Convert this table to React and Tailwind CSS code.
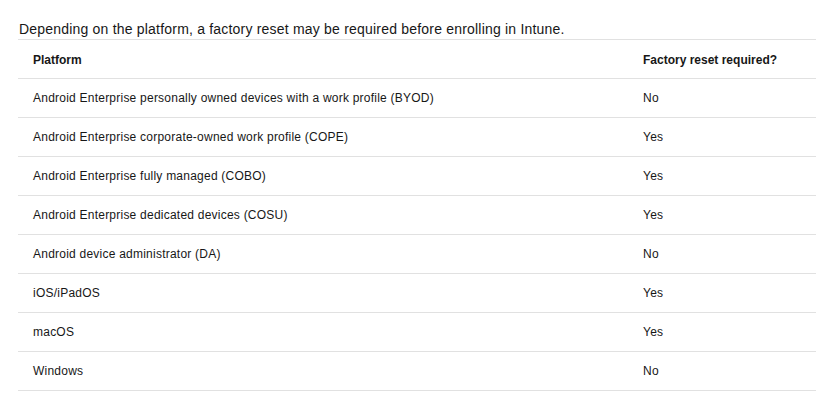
const rows = [
  ['Android Enterprise personally owned devices with a work profile (BYOD)', 'No'],
  ['Android Enterprise corporate-owned work profile (COPE)', 'Yes'],
  ['Android Enterprise fully managed (COBO)', 'Yes'],
  ['Android Enterprise dedicated devices (COSU)', 'Yes'],
  ['Android device administrator (DA)', 'No'],
  ['iOS/iPadOS', 'Yes'],
  ['macOS', 'Yes'],
  ['Windows', 'No'],
];

export default function App() {
  return (
    <div className="bg-white min-h-[403px] pl-[18px] pt-[19px] text-[#171717] font-['Liberation_Sans',Arial,sans-serif]">
      {/* Intro */}
      <p className="text-[14px] leading-[20px] pl-px tracking-[0.2px]">
        Depending on the platform, a factory reset may be required before enrolling in Intune.
      </p>

      {/* Table */}
      <table className="w-[798px] border-collapse text-[12px]">
        <thead>
          <tr className="border-t border-b border-[#e1e1e1] h-[39px]">
            <th className="w-[625px] text-left font-bold pl-[15px] pt-[2px]">Platform</th>
            <th className="text-left font-bold pt-[2px]">Factory reset required?</th>
          </tr>
        </thead>
        <tbody>
          {rows.map(([platform, reset]) => (
            <tr key={platform} className="border-b border-[#e1e1e1] h-[39px] tracking-[0.23px]">
              <td className="pl-[15px]">{platform}</td>
              <td>{reset}</td>
            </tr>
          ))}
        </tbody>
      </table>
    </div>
  );
}
